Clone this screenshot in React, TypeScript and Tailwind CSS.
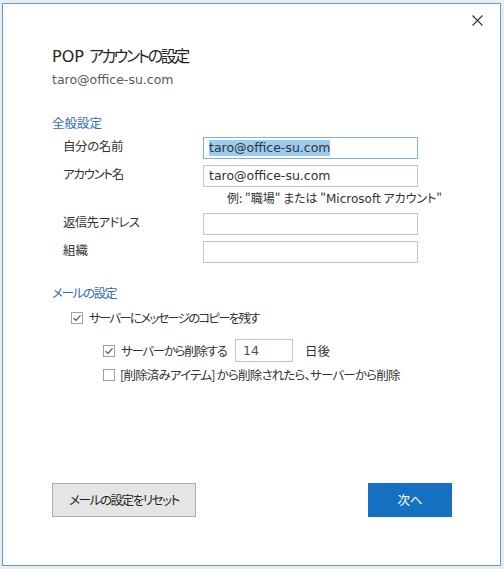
import React from 'react';

const FONT = 'font-["Noto_Sans_CJK_JP",sans-serif] [font-feature-settings:"palt"]';
const LATIN = "font-['DejaVu_Sans','Noto_Sans_CJK_JP',sans-serif]";

function Check({ checked }: { checked: boolean }) {
  return (
    <span className="flex h-[12px] w-[12px] shrink-0 items-center justify-center border border-[#a0a0a0] bg-white">
      {checked && (
        <svg width="10" height="10" viewBox="0 0 10 10" fill="none">
          <path d="M1.6 5.2L4 7.5L8.5 2.3" stroke="#555" strokeWidth="1.2" />
        </svg>
      )}
    </span>
  );
}

function Field({ label, value, focused, track }: { label: string; value?: string; focused?: boolean; track: string }) {
  return (
    <div className="flex items-center">
      <span className={`w-[140px] pb-[4px] text-[12.5px] leading-[16px] text-[#333] ${track}`}>{label}</span>
      <div
        className={
          `flex h-[22px] w-[215px] items-center border pl-[5px] text-[12.5px] leading-[16px] text-[#333] ${LATIN} ` +
          (focused ? 'border-[#7ab1e6]' : 'border-[#c4c4c4]')
        }
      >
        {value && (focused ? <span className="bg-[#9ccbf2]">{value}</span> : <span>{value}</span>)}
      </div>
    </div>
  );
}

export default function App() {
  return (
    <div lang="ja" className={`h-[569px] w-[504px] bg-[#ececec] pl-[2px] pt-[3px] ${FONT}`}>
      <div className="flex h-[563px] w-[499px] flex-col border border-[#5d9cd8] bg-white">
        <div className="flex justify-end pr-[17px] pt-[11px]">
          <svg width="11" height="11" viewBox="0 0 11 11" fill="none">
            <path d="M0.5 0.5L10.5 10.5M10.5 0.5L0.5 10.5" stroke="#333" strokeWidth="1.1" />
          </svg>
        </div>

        <div className="flex flex-1 flex-col pl-[49px] pr-[48px]">
          <h1 className="mt-[18px] text-[16px] leading-[22px] text-[#262626]">
            <span className={LATIN}>POP </span>
            <span className="tracking-[-2.4px]">アカウントの設定</span>
          </h1>
          <p className={`mt-[3px] text-[12.5px] leading-[18px] text-[#595959] ${LATIN}`}>taro@office-su.com</p>

          <h2 className="mt-[25px] text-[12.5px] leading-[18px] text-[#2f6db5]">全般設定</h2>
          <div className="mt-[5px] flex flex-col pl-[11px]">
            <Field label="自分の名前" value="taro@office-su.com" focused track="tracking-[-0.4px]" />
            <div className="mt-[6px]">
              <Field label="アカウント名" value="taro@office-su.com" track="tracking-[-1.3px]" />
            </div>
            <p className="ml-[164px] mt-[3px] text-[12px] leading-[16px] text-[#333]">
              例: "職場" または "<span className={LATIN}>Microsoft</span> アカウント"
            </p>
            <div className="mt-[6px]">
              <Field label="返信先アドレス" track="tracking-[-0.7px]" />
            </div>
            <div className="mt-[6px]">
              <Field label="組織" track="tracking-normal" />
            </div>
          </div>

          <h2 className="mt-[21px] text-[12.5px] leading-[18px] tracking-[-1.3px] text-[#2f6db5]">メールの設定</h2>
          <div className="ml-[19px] mt-[6px] flex h-[20px] items-center gap-[6px] text-[12.5px] leading-[16px] text-[#333]">
            <Check checked />
            <span className="whitespace-nowrap tracking-[-1.8px]">サーバーにメッセージのコピーを残す</span>
          </div>
          <div className="ml-[51px] mt-[11px] flex h-[23px] items-center text-[12.5px] leading-[16px] text-[#333]">
            <Check checked />
            <span className="ml-[6px] w-[114px] whitespace-nowrap tracking-[-1.3px]">サーバーから削除する</span>
            <div className={`flex h-[23px] w-[58px] shrink-0 items-center border border-[#c4c4c4] pl-[7px] text-[#3d4f66] ${LATIN}`}>14</div>
            <span className="ml-[12px]">日後</span>
          </div>
          <div className="ml-[51px] mt-[3px] flex h-[20px] items-center gap-[5px] text-[12.5px] leading-[16px] text-[#333]">
            <Check checked={false} />
            <span className="whitespace-nowrap tracking-[-0.8px]">[削除済みアイテム] から削除されたら、サーバーから削除</span>
          </div>

          <div className="mb-[48px] mt-auto flex items-center justify-between">
            <button className="h-[34px] w-[144px] border border-[#adadad] bg-[#e5e5e5] text-[12.5px] tracking-[-1.4px] text-[#262626]">
              メールの設定をリセット
            </button>
            <button className="h-[34px] w-[84px] bg-[#1570c2] text-[12.5px] text-white">次へ</button>
          </div>
        </div>
      </div>
    </div>
  );
}
